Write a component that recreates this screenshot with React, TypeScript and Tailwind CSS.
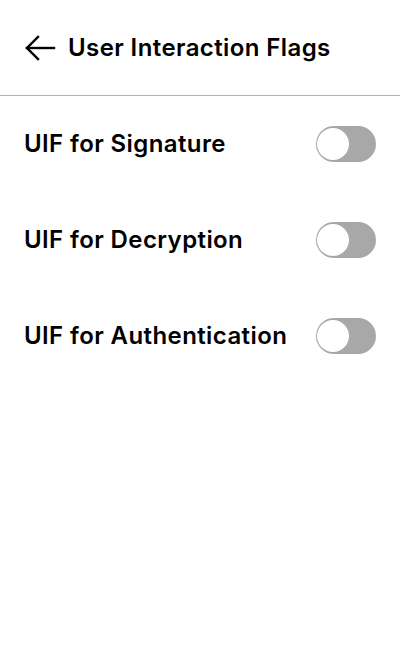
const flags = ['UIF for Signature', 'UIF for Decryption', 'UIF for Authentication'];

function Toggle() {
  return (
    <div className="relative h-[36px] w-[60px] shrink-0 rounded-full bg-[#a8a8a8]">
      <div className="absolute left-[1px] top-[2px] h-[32px] w-[32px] rounded-full bg-white" />
    </div>
  );
}

export default function App() {
  return (
    <div className="h-[672px] w-[400px] bg-white text-black" style={{ fontFamily: 'Inter, "Noto Sans", sans-serif' }}>
      <div className="flex h-[96px] items-center gap-[12px] border-b border-[#b4b4b4] px-[24px]">
        <svg width="32" height="28" viewBox="0 0 32 28" fill="none" stroke="black" strokeWidth="2.4" strokeLinecap="square">
          <path d="M30 14H3" />
          <path d="M14 3L3 14l11 11" />
        </svg>
        <span className="text-[24px] font-semibold tracking-[0.4px]">User Interaction Flags</span>
      </div>
      <div className="flex flex-col">
        {flags.map((f) => (
          <div key={f} className="flex h-[96px] items-center justify-between px-[24px]">
            <span className="text-[24px] font-semibold tracking-[0.4px]">{f}</span>
            <Toggle />
          </div>
        ))}
      </div>
    </div>
  );
}
